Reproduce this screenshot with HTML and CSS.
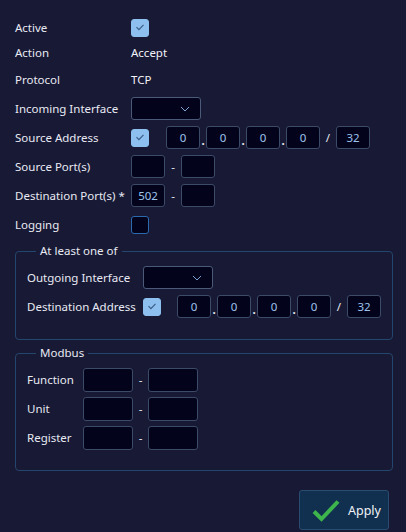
FILE: index.html
```html
<!DOCTYPE html>
<html lang="en">
<head>
  <meta charset="UTF-8">
  <meta name="viewport" content="width=device-width, initial-scale=1">
  <title>Firewall Rule</title>
  <link rel="stylesheet" href="styles.css">
</head>
<body>
  <div class="rule-form">
    <div class="row short">
      <span class="label">Active</span>
      <span class="check on"><svg viewBox="0 0 18 18"><path d="M5.5 9.2l2.4 2.4 4.6-4.8"/></svg></span>
    </div>
    <div class="row short">
      <span class="label">Action</span>
      <span class="value">Accept</span>
    </div>
    <div class="row">
      <span class="label">Protocol</span>
      <span class="value">TCP</span>
    </div>
    <div class="row">
      <span class="label">Incoming Interface</span>
      <div class="select"><svg viewBox="0 0 10 6"><path d="M1 1l4 4 4-4"/></svg></div>
    </div>
    <div class="row">
      <span class="label">Source Address</span>
      <span class="check on"><svg viewBox="0 0 18 18"><path d="M5.5 9.2l2.4 2.4 4.6-4.8"/></svg></span>
      <div class="ip">
        <span class="box">0</span><span class="dot">.</span>
        <span class="box">0</span><span class="dot">.</span>
        <span class="box">0</span><span class="dot">.</span>
        <span class="box">0</span><span class="slash">/</span>
        <span class="box">32</span>
      </div>
    </div>
    <div class="row">
      <span class="label">Source Port(s)</span>
      <span class="box port"></span><span class="dash">-</span><span class="box port"></span>
    </div>
    <div class="row">
      <span class="label">Destination Port(s) *</span>
      <span class="box port">502</span><span class="dash">-</span><span class="box port"></span>
    </div>
    <div class="row">
      <span class="label">Logging</span>
      <span class="check"></span>
    </div>

    <fieldset class="group group-any">
      <legend>At least one of</legend>
      <div class="row">
        <span class="label">Outgoing Interface</span>
        <div class="select"><svg viewBox="0 0 10 6"><path d="M1 1l4 4 4-4"/></svg></div>
      </div>
      <div class="row">
        <span class="label">Destination Address</span>
        <span class="check on"><svg viewBox="0 0 18 18"><path d="M5.5 9.2l2.4 2.4 4.6-4.8"/></svg></span>
        <div class="ip">
          <span class="box">0</span><span class="dot">.</span>
          <span class="box">0</span><span class="dot">.</span>
          <span class="box">0</span><span class="dot">.</span>
          <span class="box">0</span><span class="slash">/</span>
          <span class="box">32</span>
        </div>
      </div>
    </fieldset>

    <fieldset class="group group-modbus">
      <legend>Modbus</legend>
      <div class="row">
        <span class="label">Function</span>
        <span class="box range"></span><span class="dash">-</span><span class="box range"></span>
      </div>
      <div class="row">
        <span class="label">Unit</span>
        <span class="box range"></span><span class="dash">-</span><span class="box range"></span>
      </div>
      <div class="row">
        <span class="label">Register</span>
        <span class="box range"></span><span class="dash">-</span><span class="box range"></span>
      </div>
    </fieldset>

    <div class="actions">
      <button class="apply-btn">
        <svg viewBox="0 0 30 24"><path d="M3 13.5l7.5 7.5L27 3.5"/></svg>
        Apply
      </button>
    </div>
  </div>
</body>
</html>
```

FILE: styles.css
```css
* { margin: 0; padding: 0; box-sizing: border-box; }
body {
  background: #181935;
  color: #e8eaf3;
  font-family: 'Noto Sans', sans-serif;
  font-size: 11.5px;
}
.rule-form {
  padding: 15px 13px 0 15px;
}
.row {
  display: flex;
  align-items: center;
  height: 29px;
}
.row.short { height: 25px; }
.label {
  width: 116px;
  flex-shrink: 0;
  white-space: nowrap;
}
.value { color: #f2f3f8; }

/* checkboxes */
.check {
  width: 18px;
  height: 18px;
  border-radius: 3px;
  background: #03031c;
  border: 1.5px solid #2d69ad;
  flex-shrink: 0;
}
.check.on {
  background: #8dc0ee;
  border-color: #8dc0ee;
}
.check svg { display: block; margin: -1.5px; width: 18px; height: 18px; }
.check path {
  fill: none;
  stroke: #3b5c86;
  stroke-width: 1.2;
}

/* inputs */
.box {
  display: flex;
  align-items: center;
  justify-content: center;
  width: 34px;
  height: 23px;
  background: #03031c;
  border: 1px solid #3c4b68;
  border-radius: 3px;
  color: #9fc4ec;
}
.box.range {
  width: 50px;
  height: 24px;
}
.dash {
  width: 16px;
  text-align: center;
}
.ip {
  display: flex;
  align-items: center;
  margin-left: 17px;
}
.dot {
  width: 6px;
  text-align: center;
  font-weight: 700;
  align-self: flex-end;
  line-height: 16px;
}
.slash {
  width: 16px;
  text-align: center;
}
.select {
  position: relative;
  width: 70px;
  height: 23px;
  background: #03031c;
  border: 1px solid #4a5a78;
  border-radius: 3px;
}
.select svg {
  position: absolute;
  right: 10px;
  top: 8px;
  width: 10px;
  height: 6px;
}
.select path {
  fill: none;
  stroke: #7ea3d2;
  stroke-width: 1;
}

/* groups */
.group {
  border: 1px solid #24466c;
  border-radius: 4px;
  padding: 4px 11px 18px;
}
.group legend {
  margin-left: 9px;
  padding: 0 4px;
  line-height: 16px;
}
.group-any { margin-top: 4px; }
.group-any .ip { margin-left: 16px; }
.group-modbus { margin-top: 5px; }
.group-modbus .label { width: 56px; }
.group-modbus .dash { width: 15px; }

/* footer */
.actions {
  display: flex;
  justify-content: flex-end;
  margin-top: 19px;
  padding-right: 4px;
}
.apply-btn {
  display: flex;
  align-items: center;
  gap: 7px;
  width: 90px;
  height: 40px;
  padding-left: 11px;
  background: #11304f;
  border: 1px solid #2a4c70;
  border-radius: 3px;
  color: #f2f3f8;
  font-family: inherit;
  font-size: 12.5px;
  cursor: pointer;
}
.apply-btn svg { width: 30px; height: 24px; }
.apply-btn path {
  fill: none;
  stroke: #3db44c;
  stroke-width: 4;
}
```
